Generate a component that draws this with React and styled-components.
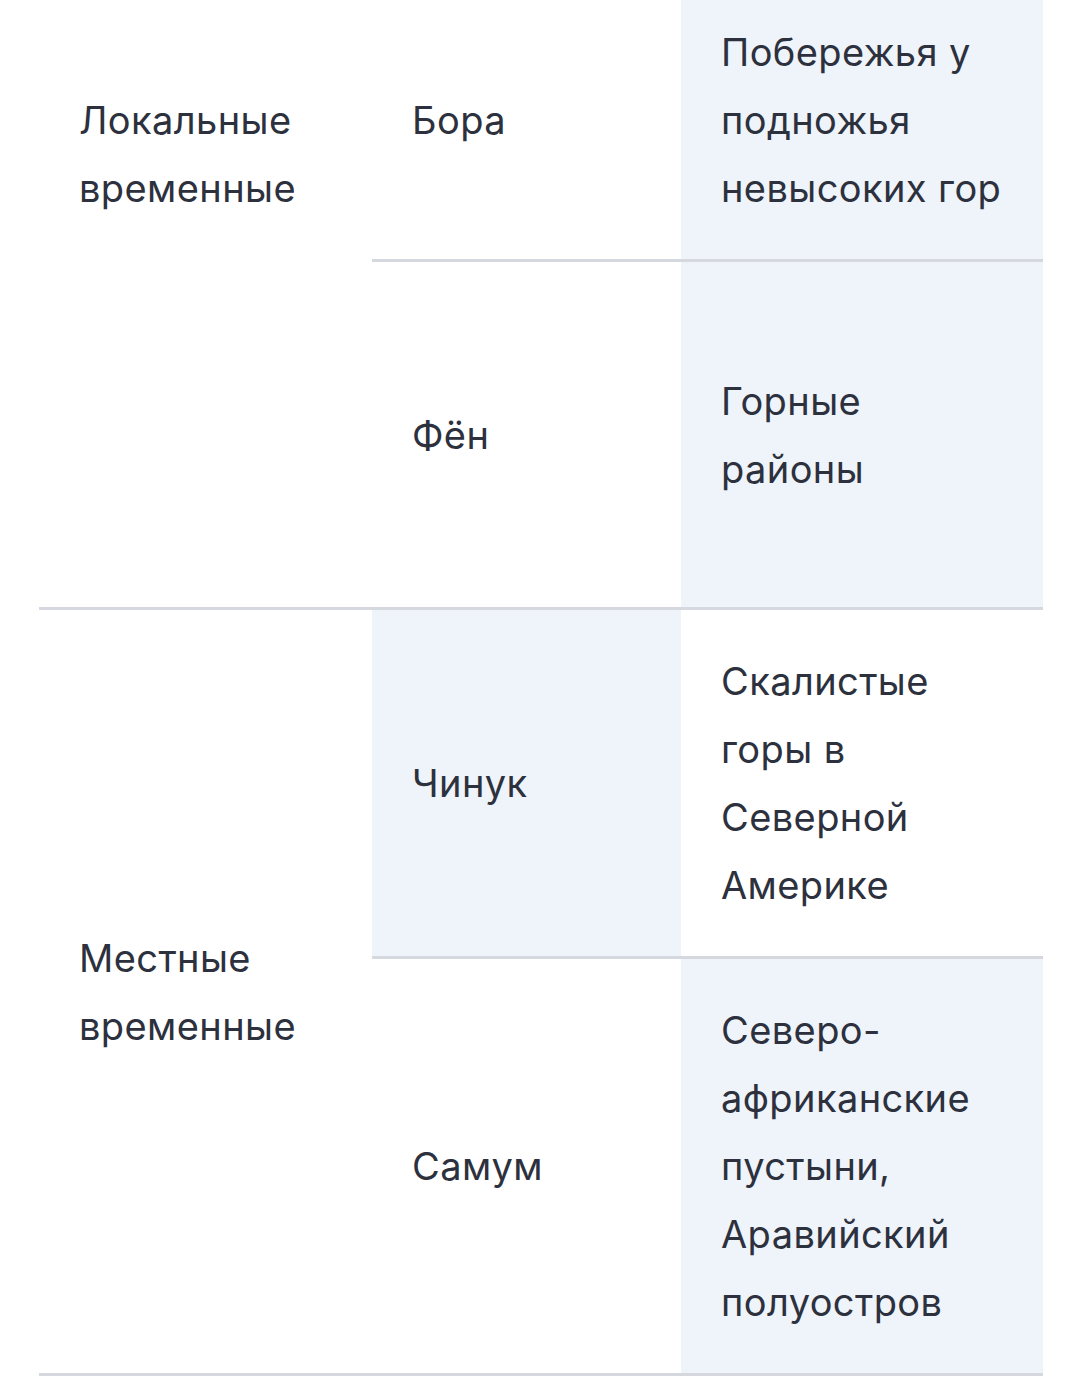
import React from "react";
import styled, { createGlobalStyle } from "styled-components";

const Global = createGlobalStyle`
  html, body { margin: 0; padding: 0; background: #ffffff; }
  body { font-family: Inter, "Noto Sans", "Liberation Sans", sans-serif; color: #2c313d; }
`;

const Page = styled.div`
  width: 1080px;
  height: 1379px;
  overflow: hidden;
  background: #fff;
`;

const Table = styled.div`
  margin: -19px 0 0 39px;
  width: 1004px;
  display: flex;
  flex-direction: column;
`;

const Group = styled.div`
  display: flex;
  border-bottom: 3px solid #d5d8de;
`;

const Category = styled.div`
  width: 333px;
  flex: none;
  box-sizing: border-box;
  padding: ${(p) => (p.$top ? "105px 40px 0" : "0 40px")};
  display: flex;
  align-items: ${(p) => (p.$top ? "flex-start" : "center")};
  font-size: 38px;
  letter-spacing: 0.4px;
  line-height: 68px;
`;

const Rows = styled.div`
  flex: 1;
  display: flex;
  flex-direction: column;
`;

const Row = styled.div`
  display: flex;
  min-height: ${(p) => p.$minH || 0}px;
  & + & {
    border-top: 3px solid #d5d8de;
  }
`;

const Cell = styled.div`
  box-sizing: border-box;
  width: ${(p) => p.$w}px;
  flex: none;
  padding: 37px 40px;
  display: flex;
  align-items: center;
  font-size: 38px;
  letter-spacing: 0.4px;
  line-height: 68px;
  white-space: nowrap;
  background: ${(p) => (p.$shade ? "#eff3fa" : "transparent")};
`;

const data = [
  {
    cat: ["Локальные", "временные"],
    top: true,
    rows: [
      { name: "Бора", region: ["Побережья у", "подножья", "невысоких гор"], shade: "region" },
      { name: "Фён", region: ["Горные", "районы"], shade: "region", minH: 345 },
    ],
  },
  {
    cat: ["Местные", "временные"],
    rows: [
      { name: "Чинук", region: ["Скалистые", "горы в", "Северной", "Америке"], shade: "name" },
      {
        name: "Самум",
        region: ["Северо-", "африканские", "пустыни,", "Аравийский", "полуостров"],
        shade: "region",
      },
    ],
  },
];

const Lines = ({ lines }) =>
  lines.map((l, i) => (
    <React.Fragment key={i}>
      {i > 0 && <br />}
      {l}
    </React.Fragment>
  ));

export default function App() {
  return (
    <Page>
      <Global />
      <Table>
        {data.map((g, gi) => (
          <Group key={gi}>
            <Category $top={g.top}>
              <div>
                <Lines lines={g.cat} />
              </div>
            </Category>
            <Rows>
              {g.rows.map((r, ri) => (
                <Row key={ri} $minH={r.minH}>
                  <Cell $w={309} $shade={r.shade === "name"}>
                    <div>{r.name}</div>
                  </Cell>
                  <Cell $w={362} $shade={r.shade === "region"}>
                    <div>
                      <Lines lines={r.region} />
                    </div>
                  </Cell>
                </Row>
              ))}
            </Rows>
          </Group>
        ))}
      </Table>
    </Page>
  );
}
